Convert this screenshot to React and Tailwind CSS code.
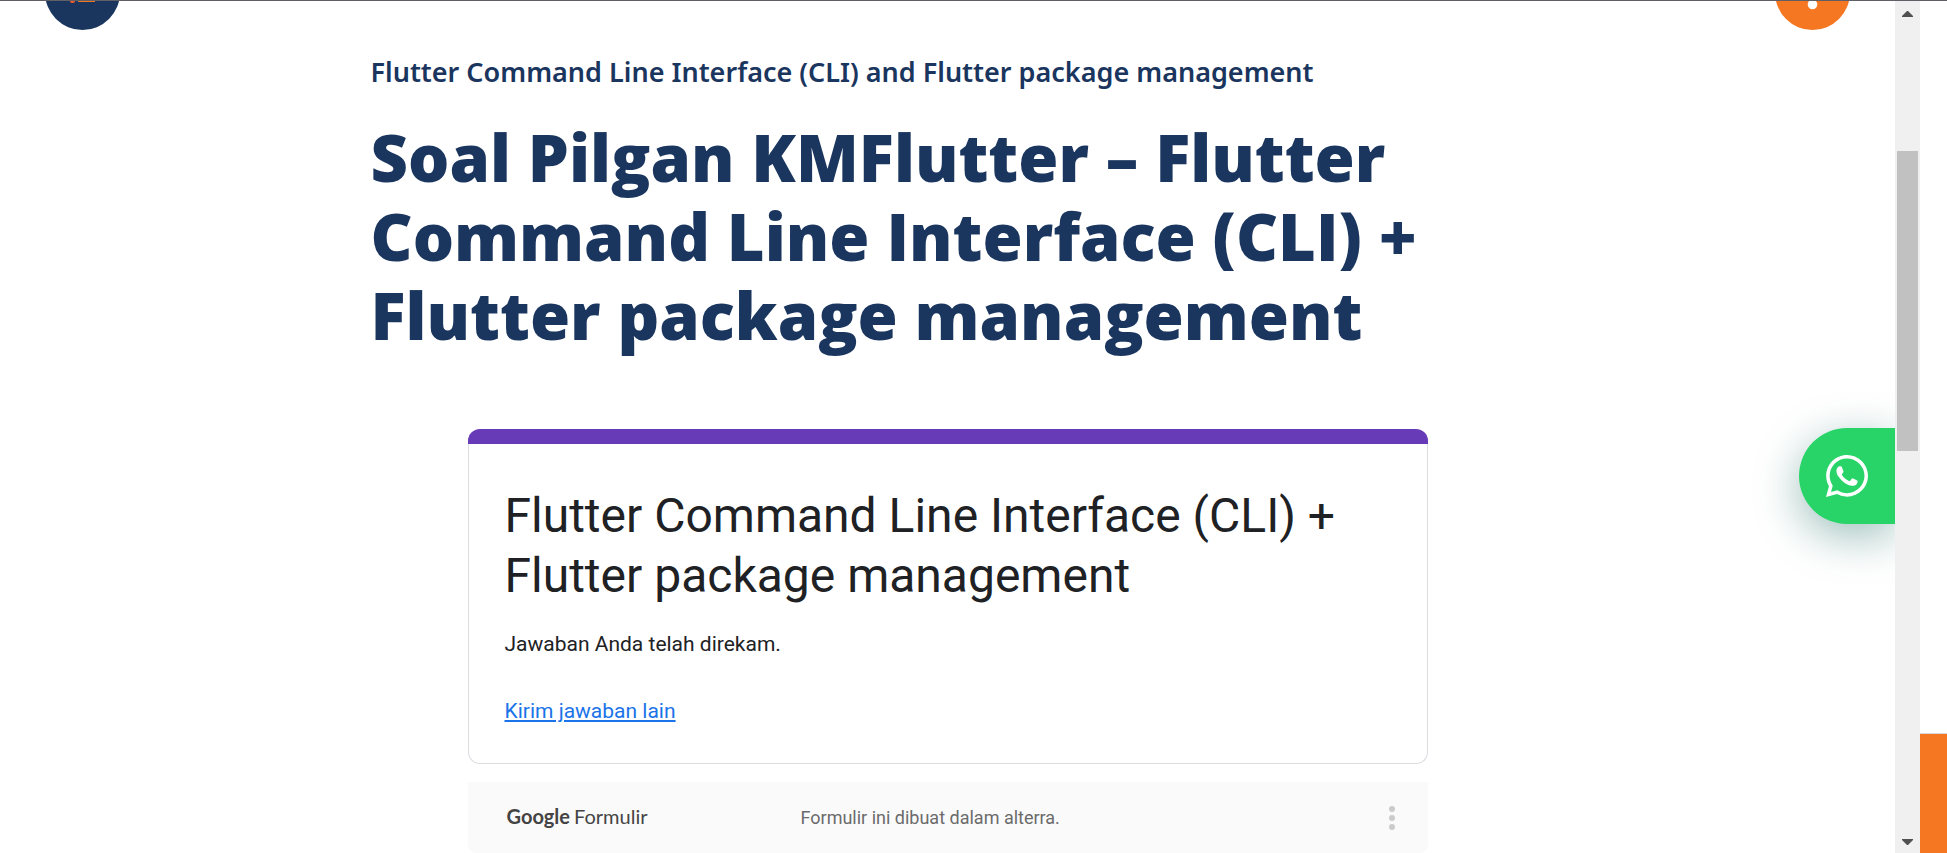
import React from 'react';
import { FaWhatsapp } from 'react-icons/fa';

function RoundButtons() {
  return (
    <header className="flex h-[29px] items-end justify-between overflow-hidden px-[45px]">
      <button type="button" aria-label="Menu" className="h-[75px] w-[75px] shrink-0 rounded-full bg-[#1a355e]">
        <svg viewBox="0 0 75 75" className="h-[75px] w-[75px]" aria-hidden="true">
          <rect x="25" y="43" width="5" height="5" rx="2" fill="#f0592a" />
          <rect x="33" y="43" width="17" height="4" fill="#f47822" />
        </svg>
      </button>
      <button type="button" aria-label="Help" className="h-[75px] w-[75px] shrink-0 rounded-full bg-[#f57722]">
        <svg viewBox="0 0 75 75" className="h-[75px] w-[75px]" aria-hidden="true">
          <circle cx="37.5" cy="49.5" r="4.8" fill="#fff" />
        </svg>
      </button>
    </header>
  );
}

function FormCard() {
  return (
    <section className="rounded-[12px] border border-[#dadce0] border-t-0 bg-white">
      <div className="-mx-px h-[15px] rounded-t-[12px] bg-[#673ab7]" />
      <div className="px-9 pt-[42px] pb-[37px]">
        <h2 className="text-[48px] leading-[60px] text-[#202124]">
          Flutter Command Line Interface (CLI) + Flutter package management
        </h2>
        <p className="mt-[23px] text-[21px] leading-[30px] text-[#202124]">Jawaban Anda telah direkam.</p>
        <a href="#again" className="mt-[37px] block w-fit text-[21px] leading-[30px] text-[#1a73e8] underline">
          Kirim jawaban lain
        </a>
      </div>
    </section>
  );
}

function FormFooter() {
  return (
    <footer className="mt-[18px] flex h-[71px] items-center rounded-b-[8px] bg-[#fafafa] pr-[30px] pl-[39px] text-[#6b6b6b]">
      <div className="w-[294px] shrink-0 pb-1 font-[Lato,sans-serif] text-[20px] leading-[24px] text-[#444]">
        <span className="mr-1 font-bold">Google</span>
        <span>Formulir</span>
      </div>
      <p className="flex-1 text-[18px] leading-[24px]">Formulir ini dibuat dalam alterra.</p>
      <button type="button" aria-label="Options" className="flex w-3 flex-col items-center gap-[3px]">
        <span className="h-[6px] w-[6px] rounded-full bg-[#cbcbcb]" />
        <span className="h-[6px] w-[6px] rounded-full bg-[#cbcbcb]" />
        <span className="h-[6px] w-[6px] rounded-full bg-[#cbcbcb]" />
      </button>
    </footer>
  );
}

function Scrollbar() {
  return (
    <div className="flex w-[25px] shrink-0 flex-col items-center bg-[#f0f0f0]" aria-hidden="true">
      <svg viewBox="0 0 11 6" className="mt-[10px] h-[6px] w-[11px] shrink-0 fill-[#505050]">
        <path d="M5 0h1l5 5v1H0V5z" />
      </svg>
      <div className="mt-[134px] h-[300px] w-[21px] shrink-0 bg-[#c1c1c1]" />
      <svg viewBox="0 0 11 6" className="mt-auto mb-2 h-[6px] w-[11px] shrink-0 fill-[#505050]">
        <path d="M5 6h1l5-5V0H0v1z" />
      </svg>
    </div>
  );
}

export default function App() {
  return (
    <div className="flex h-screen overflow-hidden border-t border-[#5f5f65] bg-white">
      <div className="relative min-w-0 flex-1 overflow-hidden">
        <RoundButtons />
        <main className="mx-auto max-w-[1154px]">
          <p className="mt-6 font-['Noto_Sans',sans-serif] text-[27px] leading-[36px] font-semibold text-[#1a355e]">
            Flutter Command Line Interface (CLI) and Flutter package management
          </p>
          <h1 className="mt-7 font-['Open_Sans',sans-serif] text-[65px] leading-[79px] font-extrabold text-[#1a355e]">
            Soal Pilgan KMFlutter – Flutter Command Line Interface (CLI) + Flutter package management
          </h1>
          <div className="mx-auto mt-[74px] max-w-[960px] font-[Roboto,sans-serif]">
            <FormCard />
            <FormFooter />
          </div>
        </main>
        <a
          href="#whatsapp"
          aria-label="WhatsApp"
          className="absolute top-[427px] right-0 flex h-24 w-24 items-center justify-center rounded-l-full bg-[#28d468] text-white shadow-[0_12px_45px_rgba(7,94,84,0.4)]"
        >
          <FaWhatsapp className="h-12 w-12" />
        </a>
      </div>
      <Scrollbar />
      <div className="flex w-[27px] shrink-0 flex-col justify-end">
        <div className="h-[120px] border-t border-[#d9d9d9] bg-[#f57722]" />
      </div>
    </div>
  );
}
